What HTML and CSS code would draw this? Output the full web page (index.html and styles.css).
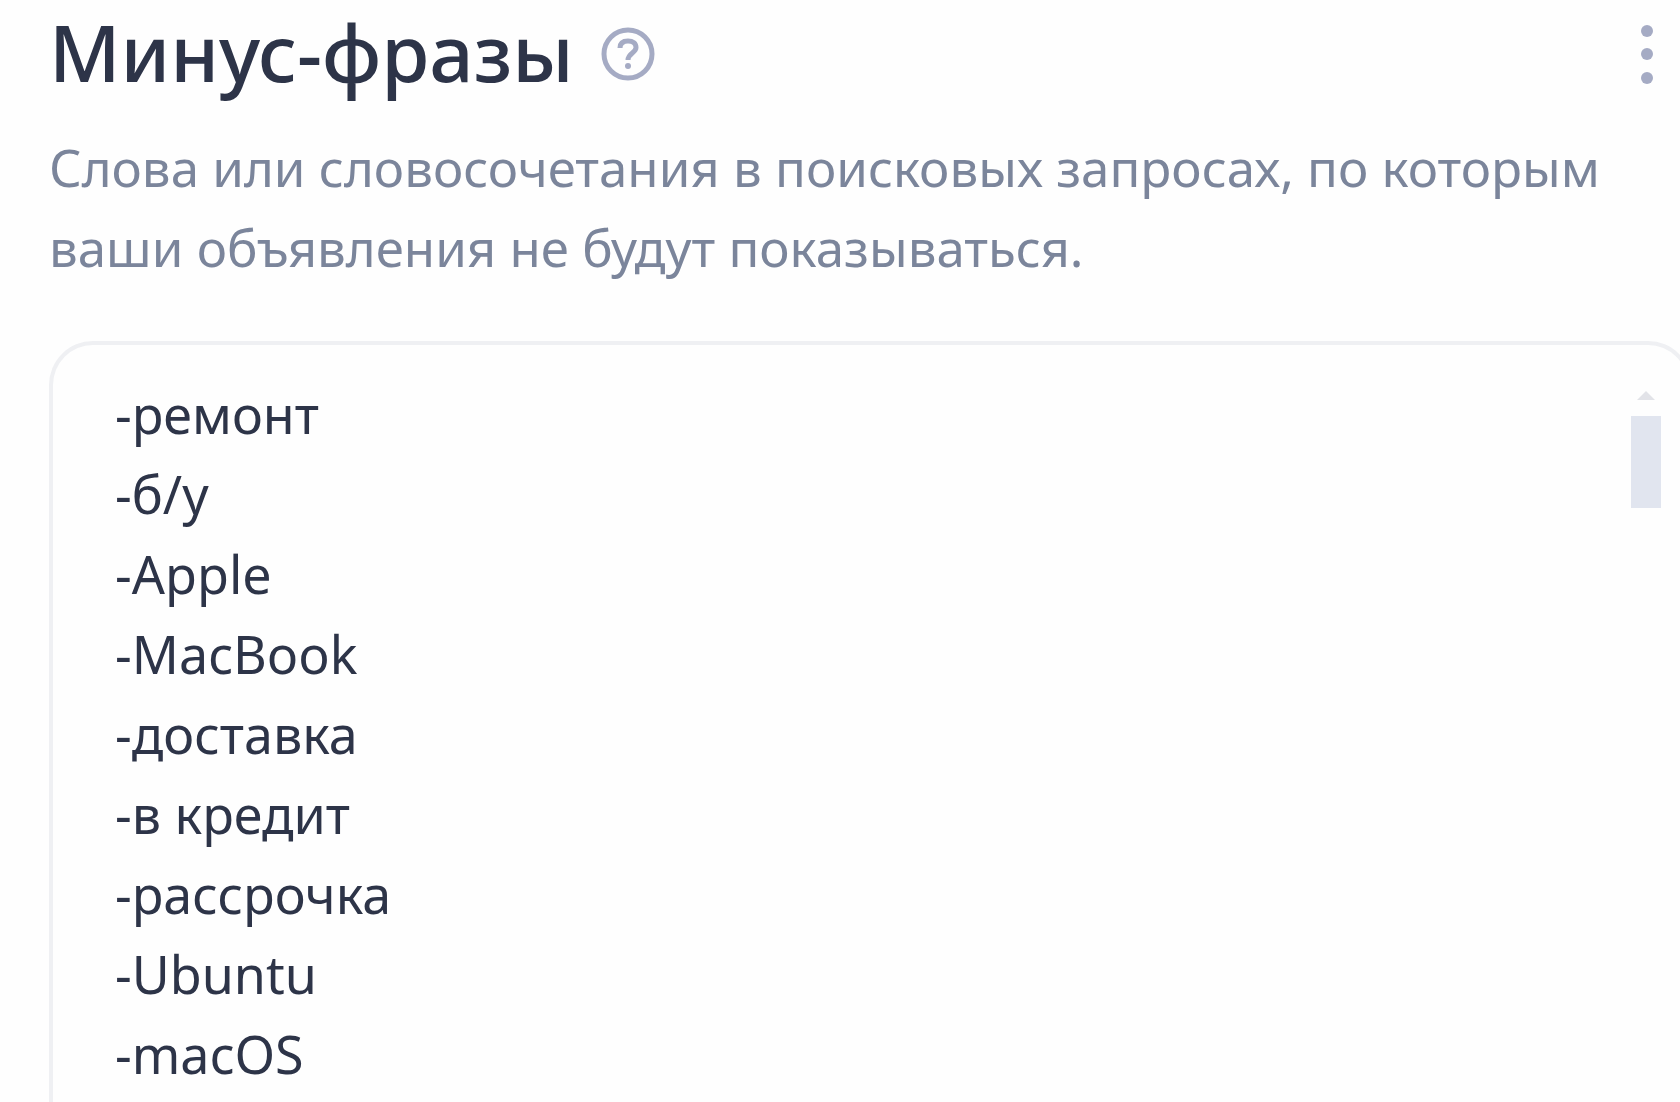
FILE: index.html
```
<!DOCTYPE html>
<html lang="ru">
<head>
  <meta charset="UTF-8">
  <meta name="viewport" content="width=device-width, initial-scale=1.0">
  <title>Минус-фразы</title>
  <link rel="stylesheet" href="styles.css">
</head>
<body>
  <main class="panel">
    <header class="panel-header">
      <h1 class="panel-title"><label for="phrases">Минус-фразы</label></h1>
      <button type="button" class="icon-btn" aria-label="Справка">
        <svg width="56" height="56" viewBox="0 0 56 56" fill="none" stroke="currentColor" stroke-width="5">
          <circle cx="28" cy="28" r="24"/>
          <path d="M20 22C20 17 23 15 28 15C33 15 36 17.500 36 21.500C36 27 28 27 28 34" stroke-width="5"/>
          <circle cx="28" cy="40" r="3" fill="currentColor" stroke="none"/>
        </svg>
      </button>
      <button type="button" class="icon-btn menu-btn" aria-label="Меню">
        <svg width="14" height="60" viewBox="0 0 14 60" fill="currentColor">
          <circle cx="7" cy="7" r="6"/>
          <circle cx="7" cy="30" r="6"/>
          <circle cx="7" cy="54" r="6"/>
        </svg>
      </button>
    </header>

    <p class="description" id="description">Слова или словосочетания в поисковых запросах, по которым ваши объявления не будут показываться.</p>

    <div class="field">
      <textarea class="phrases" id="phrases" name="phrases" aria-describedby="description" spellcheck="false">-ремонт
-б/у
-Apple
-MacBook
-доставка
-в кредит
-рассрочка
-Ubuntu
-macOS</textarea>
      <div class="scrollbar" aria-hidden="true">
        <div class="scrollbar-arrow"></div>
        <div class="scrollbar-thumb"></div>
      </div>
    </div>
  </main>
</body>
</html>
```

FILE: styles.css
```
* {
  box-sizing: border-box;
}
body {
  margin: 0;
  background: #fefefe;
  color: #2d3448;
  font-family: "Noto Sans", "Open Sans", sans-serif;
  font-size: 52px;
  line-height: 80px;
}
.panel {
  display: flex;
  flex-direction: column;
  min-height: 100vh;
  padding-left: 49px;
  overflow: hidden;
}
.panel-header {
  display: flex;
  align-items: center;
  gap: 26px;
  height: 108px;
  padding-right: 26px;
}
.panel-title {
  margin: 0;
  font-size: 78px;
  font-weight: 500;
  line-height: 108px;
}
.panel-title label {
  display: block;
  line-height: 104px;
  padding-bottom: 4px;
}
.icon-btn {
  display: flex;
  padding: 0;
  border: none;
  background: none;
  color: #a5abc4;
  cursor: pointer;
}
.icon-btn:hover {
  color: #7d859e;
}
.menu-btn {
  margin-left: auto;
}
.description {
  margin: 19px 48px 54px 0;
  color: #7b859b;
  font-size: 51px;
}
.field {
  display: flex;
  flex: 1;
  margin-right: -12px;
  padding: 29px 27px 0 62px;
  border: 4px solid #eff0f3;
  border-bottom: none;
  border-radius: 44px 44px 0 0;
}
.phrases {
  flex: 1;
  padding: 0;
  border: none;
  outline: none;
  background: transparent;
  color: inherit;
  font: inherit;
  resize: none;
  scrollbar-width: none;
}
.scrollbar {
  display: flex;
  flex-direction: column;
  align-items: center;
  gap: 16px;
  width: 30px;
  padding-top: 17px;
}
.scrollbar-arrow {
  border: 9px solid transparent;
  border-top: none;
  border-bottom-color: #e2e3e8;
}
.scrollbar-thumb {
  width: 30px;
  height: 92px;
  background: #e1e5ef;
}
```
